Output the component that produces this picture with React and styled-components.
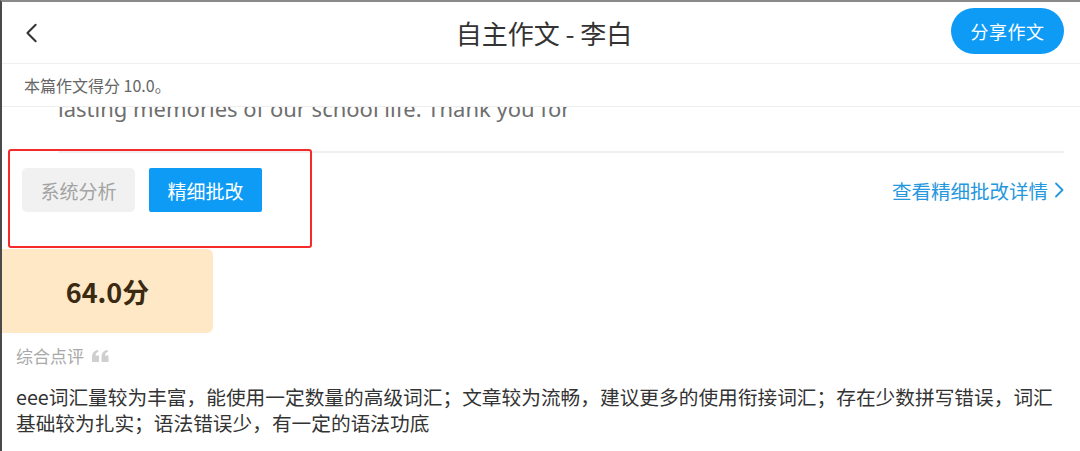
import React from "react";
import styled, { createGlobalStyle } from "styled-components";

const Global = createGlobalStyle`
  html, body { margin: 0; padding: 0; background: #fff; }
  body { font-family: "Noto Sans CJK SC", "Noto Sans", sans-serif; }
  * { box-sizing: border-box; }
`;

const Frame = styled.div`
  position: relative;
  width: 1080px;
  height: 451px;
  overflow: hidden;
  background: #fff;
  border-top: 2px solid #8a8a8a;
  border-left: 2px solid #4a4a4a;
  display: flex;
  flex-direction: column;
`;

const Header = styled.header`
  height: 62px;
  flex: none;
  display: grid;
  grid-template-columns: 1fr auto 1fr;
  align-items: center;
  padding: 0 16px 0 18px;
  border-bottom: 1px solid #f0f0f0;
`;

const BackButton = styled.button`
  justify-self: start;
  width: 24px;
  height: 28px;
  padding: 0;
  border: 0;
  background: none;
  display: flex;
  align-items: center;
  justify-content: center;
  color: #333;
`;

const Title = styled.h1`
  margin: 0;
  font-size: 26px;
  font-weight: 400;
  color: #333;
  line-height: 1;
  padding-left: 4px;
`;

const ShareButton = styled.button`
  justify-self: end;
  height: 46px;
  width: 113px;
  border: 0;
  border-radius: 23px;
  background: #0e9bf6;
  color: #fff;
  font-family: inherit;
  font-size: 18px;
  letter-spacing: 0.5px;
  margin-top: -4px;
`;

const Banner = styled.div`
  height: 43px;
  flex: none;
  display: flex;
  align-items: center;
  padding-left: 22px;
  font-size: 16px;
  color: #666;
  border-bottom: 1px solid #eeeeee;
  position: relative;
  z-index: 1;
  background: #fff;
`;

const EssayPeek = styled.div`
  height: 46px;
  flex: none;
  overflow: hidden;
  margin: 0 16px 0 56px;
  border-bottom: 2px solid #f0f0f0;
`;

const EssayLine = styled.p`
  margin: -14px 0 0;
  font-family: "Noto Sans", sans-serif;
  font-size: 22px;
  line-height: 30px;
  color: #6e6e6e;
  white-space: nowrap;
`;

const TabsRow = styled.div`
  display: flex;
  align-items: center;
  justify-content: space-between;
  padding: 0 16px 0 20px;
  margin-top: 15px;
`;

const Tabs = styled.div`
  display: flex;
  gap: 14px;
`;

const Tab = styled.button`
  width: 113px;
  height: 44px;
  border: 0;
  padding: 0;
  font-family: inherit;
  font-size: 19px;
  border-radius: ${(p) => (p.$active ? "2px" : "5px")};
  background: ${(p) => (p.$active ? "#0e9bf6" : "#f1f1f1")};
  color: ${(p) => (p.$active ? "#fff" : "#a3a3a3")};
`;

const DetailLink = styled.a`
  display: flex;
  align-items: center;
  gap: 6px;
  font-size: 19.5px;
  color: #2497dd;
  text-decoration: none;
`;

const Annotation = styled.div`
  position: absolute;
  left: 6px;
  top: 147px;
  width: 304px;
  height: 99px;
  border: 2px solid #f52b2b;
  border-radius: 3px;
  pointer-events: none;
`;

const ScoreBox = styled.div`
  margin-top: 37px;
  width: 211px;
  height: 84px;
  flex: none;
  background: #fee8c6;
  border-radius: 0 6px 6px 0;
  display: flex;
  align-items: center;
  justify-content: center;
  font-size: 27px;
  font-weight: 700;
  color: #3b2a12;
`;

const Section = styled.section`
  padding: 0 14px 0 14px;
`;

const SectionLabel = styled.div`
  margin-top: 10px;
  display: flex;
  align-items: center;
  gap: 8px;
  font-size: 17px;
  color: #a9a9a9;
  line-height: 26px;
`;

const Comment = styled.p`
  margin: 15px 0 0;
  font-size: 19.7px;
  line-height: 26px;
  color: #333;
`;

const Chevron = ({ size = 24, stroke = "currentColor", width = 2 }) => (
  <svg width={size} height={size} viewBox="0 0 24 24" fill="none">
    <path d="M16 3 L7 12 L16 21" stroke={stroke} strokeWidth={width} strokeLinecap="round" strokeLinejoin="round" />
  </svg>
);

const QuoteIcon = () => (
  <svg width="17" height="12" viewBox="0 0 17 12" fill="#cfcfcf">
    <path d="M0 12 V7 C0 3 2 0.8 6 0 L6.6 1.6 C4.6 2.4 3.6 3.8 3.5 5.6 H7 V12 Z" />
    <path d="M9.5 12 V7 C9.5 3 11.5 0.8 15.5 0 L16.1 1.6 C14.1 2.4 13.1 3.8 13 5.6 H16.5 V12 Z" />
  </svg>
);

const RightChevron = () => (
  <svg width="10" height="16" viewBox="0 0 10 16" fill="none">
    <path d="M2 1.5 L8.5 8 L2 14.5" stroke="#2497dd" strokeWidth="1.8" strokeLinecap="round" strokeLinejoin="round" />
  </svg>
);

export default function App() {
  return (
    <>
      <Global />
      <Frame>
        <Header>
          <BackButton aria-label="返回">
            <Chevron size={22} width={2.2} stroke="#333" />
          </BackButton>
          <Title>自主作文 - 李白</Title>
          <ShareButton>分享作文</ShareButton>
        </Header>
        <Banner>本篇作文得分 10.0。</Banner>
        <EssayPeek>
          <EssayLine>lasting memories of our school life. Thank you for</EssayLine>
        </EssayPeek>
        <TabsRow>
          <Tabs>
            <Tab>系统分析</Tab>
            <Tab $active>精细批改</Tab>
          </Tabs>
          <DetailLink href="#">
            查看精细批改详情
            <RightChevron />
          </DetailLink>
        </TabsRow>
        <ScoreBox>64.0分</ScoreBox>
        <Section>
          <SectionLabel>
            综合点评
            <QuoteIcon />
          </SectionLabel>
          <Comment>
            eee词汇量较为丰富，能使用一定数量的高级词汇；文章较为流畅，建议更多的使用衔接词汇；存在少数拼写错误，词汇基础较为扎实；语法错误少，有一定的语法功底
          </Comment>
        </Section>
        <Annotation />
      </Frame>
    </>
  );
}
